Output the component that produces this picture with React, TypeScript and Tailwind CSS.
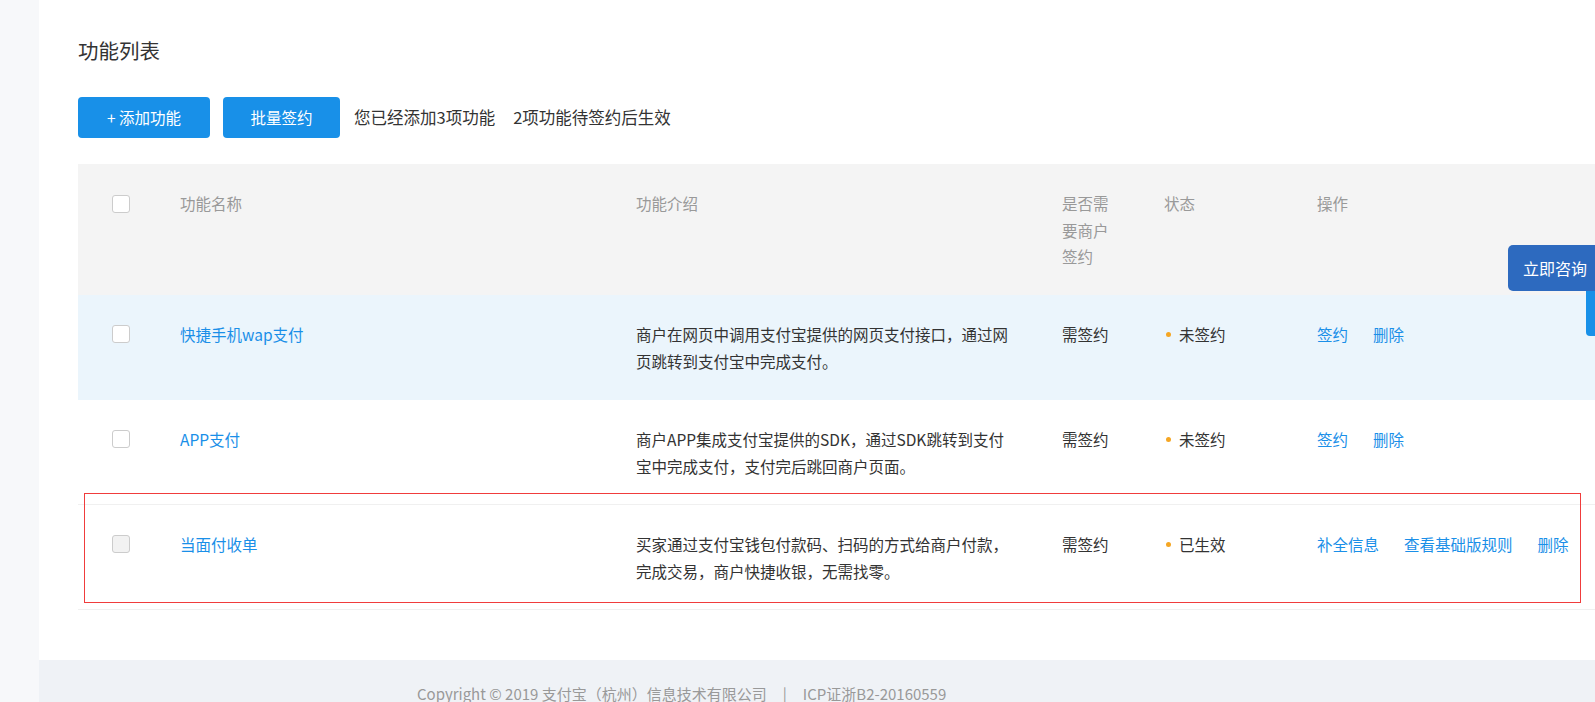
import React from 'react'

type Row = {
  name: string
  desc: string[]
  need: string
  status: string
  ops: string[]
  bg: string
  disabled?: boolean
}

const rows: Row[] = [
  {
    name: '快捷手机wap支付',
    desc: ['商户在网页中调用支付宝提供的网页支付接口，通过网', '页跳转到支付宝中完成支付。'],
    need: '需签约',
    status: '未签约',
    ops: ['签约', '删除'],
    bg: 'bg-[#ebf5fc] border-[#ebf5fc]',
  },
  {
    name: 'APP支付',
    desc: ['商户APP集成支付宝提供的SDK，通过SDK跳转到支付', '宝中完成支付，支付完后跳回商户页面。'],
    need: '需签约',
    status: '未签约',
    ops: ['签约', '删除'],
    bg: 'bg-white border-[#f0f0f0]',
  },
  {
    name: '当面付收单',
    desc: ['买家通过支付宝钱包付款码、扫码的方式给商户付款，', '完成交易，商户快捷收银，无需找零。'],
    need: '需签约',
    status: '已生效',
    ops: ['补全信息', '查看基础版规则', '删除'],
    bg: 'bg-white border-[#f0f0f0]',
    disabled: true,
  },
]

const cols = 'grid grid-cols-[102px_456px_426px_102px_153px_1fr]'

function Check({ disabled }: { disabled?: boolean }) {
  return (
    <div className="h-[27px] flex items-center pl-[34px]">
      <span
        className={`block w-[18px] h-[18px] rounded-[3px] border border-[#cccccc] ${
          disabled ? 'bg-[#f2f2f2]' : 'bg-white'
        }`}
      />
    </div>
  )
}

export default function App() {
  return (
    <div
      className="relative flex h-[702px] w-full overflow-hidden bg-white text-[#333] text-[15.5px]"
      style={{ fontFamily: '"Noto Sans CJK SC", "Noto Sans", sans-serif' }}
    >
      <aside className="w-[39px] shrink-0 bg-[#f7f8fa]" />

      <div className="flex-1 min-w-0 flex flex-col">
        <div className="pl-[39px] pt-[36px]">
          <h1 className="text-[20.5px] leading-[28px] font-normal text-[#333]">功能列表</h1>

          <div className="mt-[33px] flex items-center">
            <button className="w-[132px] h-[41px] rounded-[4px] bg-[#1890e8] text-white leading-none">
              + 添加功能
            </button>
            <button className="ml-[13px] w-[117px] h-[41px] rounded-[4px] bg-[#1890e8] text-white leading-none">
              批量签约
            </button>
            <span className="ml-[14px] text-[16.5px]">您已经添加3项功能</span>
            <span className="ml-[18px] text-[16.5px]">2项功能待签约后生效</span>
          </div>

          <div className="mt-[26px] w-[1560px]">
            <div className={`${cols} bg-[#f4f4f4] text-[#999] leading-[26.5px] pt-[26px] pb-[25px]`}>
              <Check />
              <div>功能名称</div>
              <div>功能介绍</div>
              <div className="w-[50px]">是否需要商户签约</div>
              <div>状态</div>
              <div>操作</div>
            </div>

            {rows.map((r) => (
              <div
                key={r.name}
                className={`${cols} h-[105px] border-b pt-[26px] leading-[27px] ${r.bg}`}
              >
                <Check disabled={r.disabled} />
                <div className="text-[#1a8fe8]">{r.name}</div>
                <div>
                  {r.desc.map((l) => (
                    <div key={l} className="whitespace-nowrap">
                      {l}
                    </div>
                  ))}
                </div>
                <div>{r.need}</div>
                <div className="flex items-center h-[27px]">
                  <span className="ml-[2px] w-[5px] h-[5px] rounded-full bg-[#f5a623]" />
                  <span className="ml-[8px]">{r.status}</span>
                </div>
                <div className="flex gap-[25px] text-[#1a8fe8] whitespace-nowrap">
                  {r.ops.map((o) => (
                    <span key={o}>{o}</span>
                  ))}
                </div>
              </div>
            ))}
          </div>
        </div>

        <footer className="mt-[50px] h-[100px] bg-[#eff2f6] pt-[24px] pl-[378px] text-[15px] leading-[20px] text-[#999] whitespace-nowrap">
          Copyright © 2019 支付宝（杭州）信息技术有限公司
          <span className="mx-[16px]">|</span>
          ICP证浙B2-20160559
        </footer>
      </div>

      {/* annotation box round the last row */}
      <div className="absolute left-[84px] top-[493px] w-[1497px] h-[110px] border border-[#f03c3c] pointer-events-none" />

      {/* floating consult button */}
      <div className="absolute right-0 top-[245px] w-[87px] h-[46px] rounded-l-[5px] bg-[#2d6abf] text-white text-[16px] flex items-center pl-[15px]">
        立即咨询
      </div>
      <div className="absolute right-0 top-[291px] w-[9px] h-[45px] rounded-bl-[4px] bg-[#1890e8]" />
    </div>
  )
}
